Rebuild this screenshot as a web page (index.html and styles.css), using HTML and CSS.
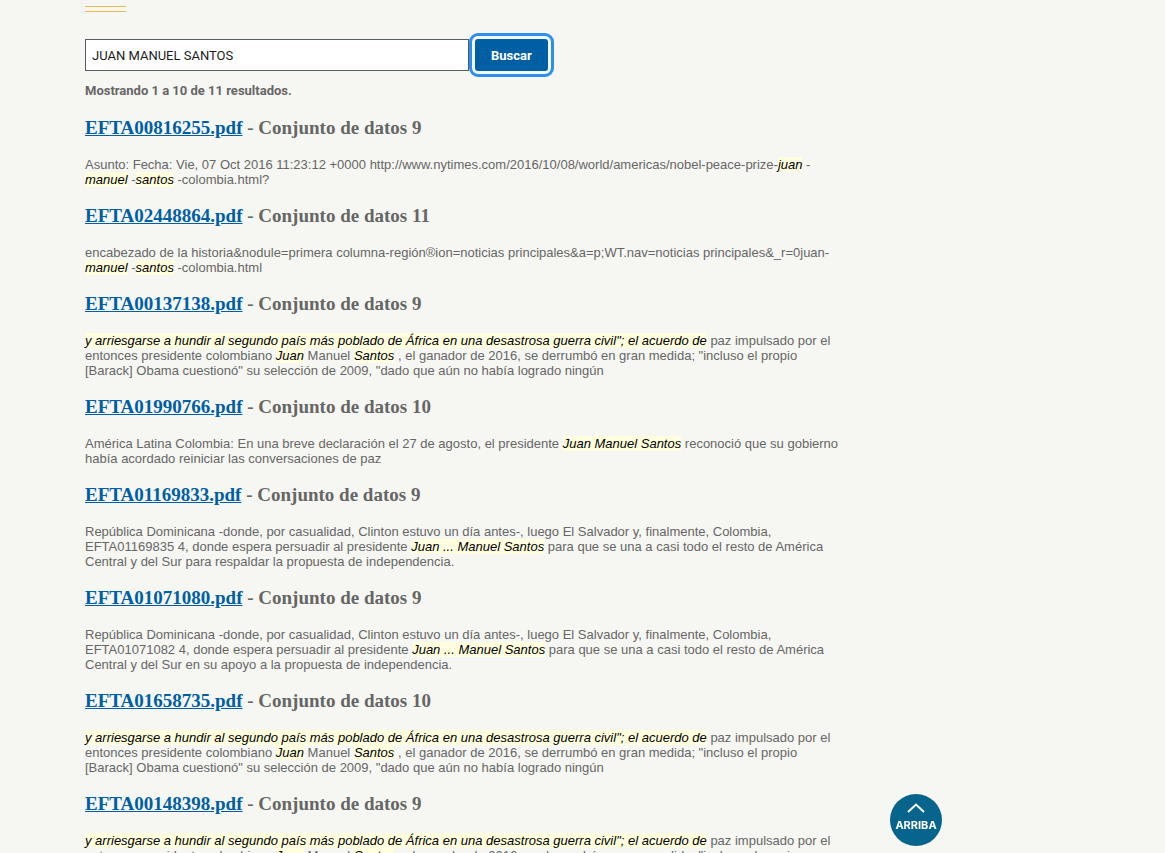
FILE: index.html
```html
<!DOCTYPE html>
<html lang="es">
<head>
<meta charset="utf-8">
<meta name="viewport" content="width=device-width, initial-scale=1">
<title>Buscar</title>
<link rel="stylesheet" href="styles.css">
</head>
<body>
<main class="page">
  <div class="rule"></div>
  <form class="search" role="search">
    <input class="search-field" type="text" aria-label="Buscar documentos" value="JUAN MANUEL SANTOS">
    <button class="search-button" type="button">Buscar</button>
  </form>
  <p class="count">Mostrando 1 a 10 de 11 resultados.</p>
  <section class="results">
    <article class="result">
      <h3 class="title"><a href="#">EFTA00816255.pdf</a> - Conjunto de datos 9</h3>
      <p class="excerpt">Asunto: Fecha: Vie, 07 Oct 2016 11:23:12 +0000 http://www.nytimes.com/2016/10/08/world/americas/nobel-peace-prize-<em>juan</em> -<br><em>manuel</em> -<em>santos</em> -colombia.html?</p>
    </article>
    <article class="result">
      <h3 class="title"><a href="#">EFTA02448864.pdf</a> - Conjunto de datos 11</h3>
      <p class="excerpt">encabezado de la historia&amp;nodule=primera columna-región®ion=noticias principales&amp;a=p;WT.nav=noticias principales&amp;_r=0juan-<br><em>manuel</em> -<em>santos</em> -colombia.html</p>
    </article>
    <article class="result">
      <h3 class="title"><a href="#">EFTA00137138.pdf</a> - Conjunto de datos 9</h3>
      <p class="excerpt"><em>y arriesgarse a hundir al segundo país más poblado de África en una desastrosa guerra civil"; el acuerdo de</em> paz impulsado por el<br>entonces presidente colombiano <em>Juan</em> Manuel <em>Santos</em> , el ganador de 2016, se derrumbó en gran medida; "incluso el propio<br>[Barack] Obama cuestionó" su selección de 2009, "dado que aún no había logrado ningún</p>
    </article>
    <article class="result">
      <h3 class="title"><a href="#">EFTA01990766.pdf</a> - Conjunto de datos 10</h3>
      <p class="excerpt">América Latina Colombia: En una breve declaración el 27 de agosto, el presidente <em>Juan Manuel Santos</em> reconoció que su gobierno<br>había acordado reiniciar las conversaciones de paz</p>
    </article>
    <article class="result">
      <h3 class="title"><a href="#">EFTA01169833.pdf</a> - Conjunto de datos 9</h3>
      <p class="excerpt">República Dominicana -donde, por casualidad, Clinton estuvo un día antes-, luego El Salvador y, finalmente, Colombia,<br>EFTA01169835 4, donde espera persuadir al presidente <em>Juan ... Manuel Santos</em> para que se una a casi todo el resto de América<br>Central y del Sur para respaldar la propuesta de independencia.</p>
    </article>
    <article class="result">
      <h3 class="title"><a href="#">EFTA01071080.pdf</a> - Conjunto de datos 9</h3>
      <p class="excerpt">República Dominicana -donde, por casualidad, Clinton estuvo un día antes-, luego El Salvador y, finalmente, Colombia,<br>EFTA01071082 4, donde espera persuadir al presidente <em>Juan ... Manuel Santos</em> para que se una a casi todo el resto de América<br>Central y del Sur en su apoyo a la propuesta de independencia.</p>
    </article>
    <article class="result">
      <h3 class="title"><a href="#">EFTA01658735.pdf</a> - Conjunto de datos 10</h3>
      <p class="excerpt"><em>y arriesgarse a hundir al segundo país más poblado de África en una desastrosa guerra civil"; el acuerdo de</em> paz impulsado por el<br>entonces presidente colombiano <em>Juan</em> Manuel <em>Santos</em> , el ganador de 2016, se derrumbó en gran medida; "incluso el propio<br>[Barack] Obama cuestionó" su selección de 2009, "dado que aún no había logrado ningún</p>
    </article>
    <article class="result">
      <h3 class="title"><a href="#">EFTA00148398.pdf</a> - Conjunto de datos 9</h3>
      <p class="excerpt"><em>y arriesgarse a hundir al segundo país más poblado de África en una desastrosa guerra civil"; el acuerdo de</em> paz impulsado por el<br>entonces presidente colombiano <em>Juan</em> Manuel <em>Santos</em> , el ganador de 2016, se derrumbó en gran medida; "incluso el propio</p>
    </article>
  </section>
</main>
<a class="to-top" href="#">
  <svg class="chevron" viewBox="0 0 18 10" aria-hidden="true"><path d="M1 9 L9 1.500 L17 9" fill="none" stroke="currentColor" stroke-width="2"/></svg>
  ARRIBA
</a>
</body>
</html>
```

FILE: styles.css
```css
* {
  box-sizing: border-box;
}

body {
  margin: 0;
  height: 100vh;
  overflow: hidden;
  background: #f6f7f2;
  color: #666;
  font: 13px/15px "Liberation Sans", Arial, sans-serif;
}

.page {
  padding: 6px 85px 0;
}

.rule {
  width: 41px;
  height: 6px;
  border: solid #edb84c;
  border-width: 1px 0;
}

.search {
  display: flex;
  gap: 6px;
  margin-top: 27px;
}

.search-field {
  width: 384px;
  height: 32px;
  padding: 0 6px;
  border: 1px solid #565c65;
  border-radius: 0;
  background: #fff;
  color: #1b1b1b;
  font: 13px/15px Roboto, sans-serif;
}

.search-button {
  padding: 0 16px;
  border: 0;
  border-radius: 3px;
  background: #005ea2;
  box-shadow: 0 0 0 3px #f3faff;
  outline: 3px solid #2e8eee;
  outline-offset: 3px;
  color: #fff;
  font: bold 13px/15px Roboto, sans-serif;
}

.count {
  margin: 12px 0 19px;
  font: bold 13px/15px Roboto, sans-serif;
}

.result {
  margin-bottom: 18px;
}

.title {
  margin: 0 0 18px;
  font: bold 19px/22px "Liberation Serif", serif;
}

.title a {
  color: #005ea2;
}

.excerpt {
  margin: 0;
  white-space: nowrap;
}

.excerpt em {
  background: #ffffdf;
  color: #000;
}

.to-top {
  position: fixed;
  right: 223px;
  bottom: 7px;
  display: flex;
  flex-direction: column;
  align-items: center;
  gap: 5px;
  width: 52px;
  height: 52px;
  padding-top: 9px;
  border-radius: 50%;
  background: #07648d;
  color: #fff;
  font: bold 11px/15px Inter, sans-serif;
  text-decoration: none;
}

.chevron {
  width: 18px;
  height: 10px;
}
```
